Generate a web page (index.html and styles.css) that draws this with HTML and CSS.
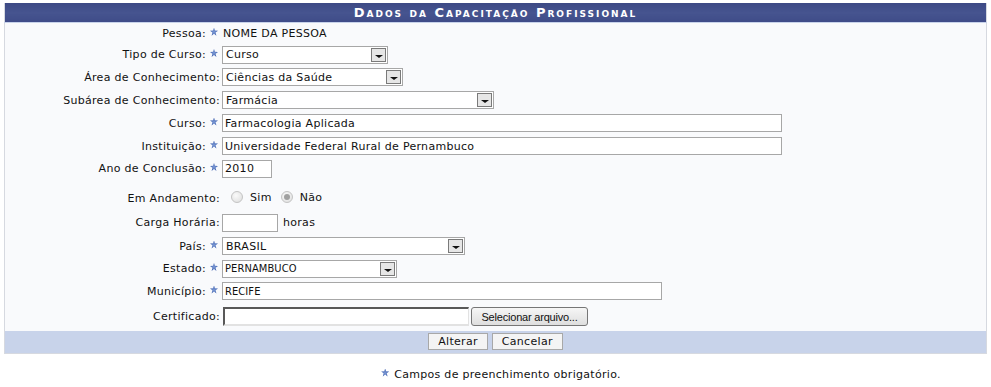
FILE: index.html
```html
<!DOCTYPE html>
<html lang="pt">
<head>
<meta charset="utf-8">
<link rel="stylesheet" href="styles.css">
</head>
<body>
<table class="form">
  <thead>
    <tr><th colspan="2" class="caption">Dados da Capacitação Profissional</th></tr>
  </thead>
  <tbody>
    <tr class="h21"><td class="lbl">Pessoa:<span class="req"></span></td><td class="val"><span class="plain">NOME DA PESSOA</span></td></tr>
    <tr class="h22"><td class="lbl">Tipo de Curso:<span class="req"></span></td><td class="val"><div class="select w166"><span class="sel-text">Curso</span><span class="sel-btn"><i></i></span></div></td></tr>
    <tr class="h23"><td class="lbl">Área de Conhecimento:</td><td class="val"><div class="select w180"><span class="sel-text">Ciências da Saúde</span><span class="sel-btn"><i></i></span></div></td></tr>
    <tr class="h23"><td class="lbl">Subárea de Conhecimento:</td><td class="val"><div class="select w272"><span class="sel-text">Farmácia</span><span class="sel-btn"><i></i></span></div></td></tr>
    <tr class="h23"><td class="lbl">Curso:<span class="req"></span></td><td class="val"><div class="text w560">Farmacologia Aplicada</div></td></tr>
    <tr class="h23"><td class="lbl">Instituição:<span class="req"></span></td><td class="val"><div class="text w560">Universidade Federal Rural de Pernambuco</div></td></tr>
    <tr class="h22"><td class="lbl">Ano de Conclusão:<span class="req"></span></td><td class="val"><div class="text w50">2010</div></td></tr>
    <tr class="h30 low"><td class="lbl">Em Andamento:</td><td class="val"><span class="radios"><span class="radio"></span><span class="rlabel">Sim</span><span class="radio on"></span><span class="rlabel">Não</span></span></td></tr>
    <tr class="h24"><td class="lbl">Carga Horária:</td><td class="val"><div class="text w56"></div><span class="unit">horas</span></td></tr>
    <tr class="h23"><td class="lbl">País:<span class="req"></span></td><td class="val"><div class="select w243"><span class="sel-text">BRASIL</span><span class="sel-btn"><i></i></span></div></td></tr>
    <tr class="h22"><td class="lbl">Estado:<span class="req"></span></td><td class="val"><div class="select w175 narrow"><span class="sel-text">PERNAMBUCO</span><span class="sel-btn"><i></i></span></div></td></tr>
    <tr class="h23"><td class="lbl">Município:<span class="req"></span></td><td class="val"><div class="text w440 narrow">RECIFE</div></td></tr>
    <tr class="h28"><td class="lbl">Certificado:</td><td class="val"><div class="file"><span class="file-box"></span><span class="file-btn">Selecionar arquivo...</span></div></td></tr>
  </tbody>
  <tfoot>
    <tr><td colspan="2" class="actions"><button class="btn" type="button">Alterar</button><button class="btn" type="button">Cancelar</button></td></tr>
  </tfoot>
</table>
<p class="note"><span class="req"></span>Campos de preenchimento obrigatório.</p>
</body>
</html>
```

FILE: styles.css
```css
html, body { background: #fff; }
body {
  margin: 3px 4px 0 4px;
  font-family: "DejaVu Sans", Verdana, sans-serif;
  font-size: 11px;
  letter-spacing: 0.3px;
  color: #111;
}
.form {
  width: 983px;
  border-collapse: collapse;
  border: 1px solid #d6d9e0;
  border-top: none;
  background: #f9fafc;
}
.caption {
  height: 19px;
  padding: 0;
  background: linear-gradient(#3c4984, #46548f 50%, #3f4c88);
  color: #fff;
  font-size: 13px;
  font-weight: bold;
  font-variant: small-caps;
  letter-spacing: 2px;
  text-align: center;
  border-bottom: 1px solid #c8d3ea;
}
.form td { padding: 0; }
.lbl {
  width: 215px;
  text-align: right;
  white-space: nowrap;
}
.val { padding-left: 2px !important; white-space: nowrap; }
.h21 { height: 21px; }
.h22 { height: 22px; }
.h23 { height: 23px; }
.h24 { height: 24px; }
.h28 { height: 28px; }
.h30 { height: 31px; }
.low td { vertical-align: middle; padding-top: 7px; }
.req {
  display: inline-block;
  width: 8px;
  height: 8px;
  margin: 0 2px 0 4px;
  vertical-align: 1px;
  clip-path: polygon(50% 0%, 62% 35%, 100% 38%, 70% 60%, 80% 100%, 50% 76%, 20% 100%, 30% 60%, 0% 38%, 38% 35%);
  background: radial-gradient(circle at 50% 50%, #7c9ad6, #3f60ad 70%);
}
.plain { padding-left: 1px; }
.select, .text {
  display: inline-flex;
  align-items: center;
  box-sizing: border-box;
  height: 18px;
  border: 1px solid #a7a7a7;
  background: #fff;
  vertical-align: middle;
}
.sel-text { flex: 1; padding-left: 3px; }
.narrow { font-family: "DejaVu Sans Condensed", "DejaVu Sans", sans-serif; letter-spacing: 0.1px; }
.narrow .sel-text { padding-left: 2px; }
.sel-btn {
  box-sizing: border-box;
  width: 15px;
  height: 14px;
  margin-right: 1px;
  border: 1px solid #7a7a7a;
  background: #e6e6e6;
  display: flex;
  align-items: center;
  justify-content: center;
}
.sel-btn i {
  width: 0; height: 0;
  margin-top: 3px;
  border-left: 4px solid transparent;
  border-right: 4px solid transparent;
  border-top: 3px solid #111;
}
.text { padding-left: 2px; }
.w166 { width: 166px; }
.w180 { width: 181px; }
.w272 { width: 272px; }
.w560 { width: 560px; }
.w50 { width: 50px; }
.w56 { width: 56px; }
.w243 { width: 243px; }
.w175 { width: 175px; }
.w440 { width: 440px; }
.unit { margin-left: 5px; vertical-align: middle; }
.radios { display: inline-flex; align-items: center; padding-left: 9px; }
.radio {
  box-sizing: border-box;
  width: 12px;
  height: 12px;
  border-radius: 50%;
  border: 1px solid #c4c4c4;
  background: radial-gradient(circle at 40% 35%, #fafafa, #dcdcdc);
  position: relative;
}
.radio.on::after {
  content: "";
  position: absolute;
  left: 2px; top: 2px;
  width: 6px; height: 6px;
  border-radius: 50%;
  background: #a0a0a0;
}
.rlabel { margin: 0 9px 0 7px; }
.file { display: inline-flex; align-items: center; vertical-align: middle; }
.file-box {
  box-sizing: border-box;
  width: 246px;
  height: 19px;
  margin-left: 1px;
  border-top: 2px solid #585858;
  border-left: 2px solid #585858;
  border-right: 1px solid #e2e2e2;
  border-bottom: 2px solid #e2e2e2;
  background: #fff;
}
.file-btn {
  box-sizing: border-box;
  margin-left: 2px;
  width: 117px;
  height: 19px;
  border: 1px solid #767676;
  border-radius: 3px;
  background: linear-gradient(#f6f6f6, #dedede);
  font-family: "Liberation Sans", Arial, sans-serif;
  font-size: 11px;
  display: flex;
  align-items: center;
  justify-content: center;
  letter-spacing: -0.2px;
}
.actions {
  height: 22px;
  background: #c8d3ea;
  text-align: center;
  padding: 0 !important;
}
.btn {
  box-sizing: border-box;
  height: 17px;
  margin: 0 2px;
  padding: 0 9px;
  font-family: "DejaVu Sans", Verdana, sans-serif;
  font-size: 11px;
  letter-spacing: 0.3px;
  color: #111;
  background: #f4f4f4;
  border: 1px solid #a8a8a8;
  vertical-align: middle;
}
.note {
  margin: 14px 0 0;
  padding-left: 11px;
  text-align: center;
}
.note .req { margin: 0 5px 0 0; }
```
